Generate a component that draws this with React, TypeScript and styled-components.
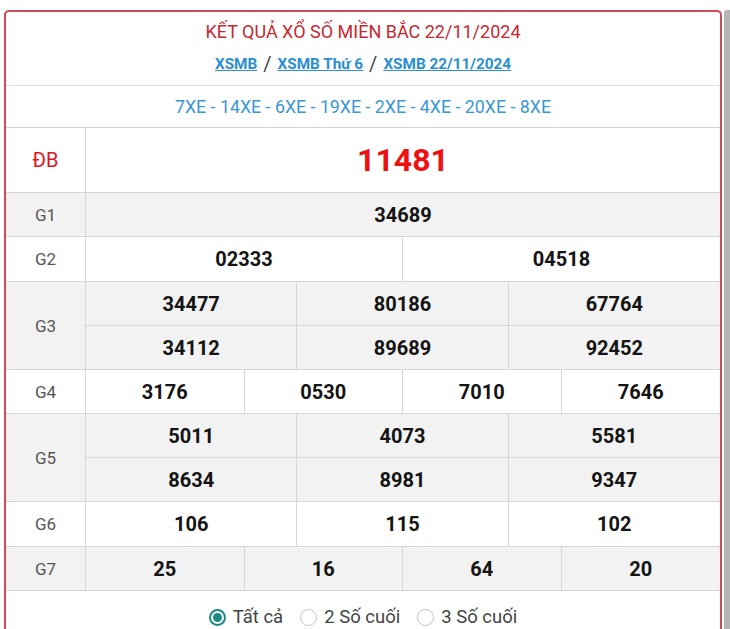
import React from "react";
import styled, { createGlobalStyle } from "styled-components";

const GlobalStyle = createGlobalStyle`
  html, body { margin: 0; padding: 0; background: #fff; }
  body { font-family: Roboto, "Noto Sans", "Liberation Sans", sans-serif; color: #222; }
  * { box-sizing: border-box; }
`;

const Page = styled.div`
  position: relative;
  width: 730px;
  height: 629px;
  overflow: hidden;
  padding: 10px 8px 0 4px;
`;

const ScrollStrip = styled.div`
  position: absolute;
  right: 0;
  top: 10px;
  width: 6px;
  height: 640px;
  background: #b4b4b4;
  border-radius: 3px 0 0 0;
`;

const Card = styled.div`
  width: 718px;
  border: 2px solid #d24a57;
  border-bottom: none;
  border-radius: 5px 5px 0 0;
  background: #fff;
`;

const Header = styled.div`
  display: flex;
  flex-direction: column;
  align-items: center;
  padding: 8px 0 11px;
  border-bottom: 1px solid #dedede;
`;

const Title = styled.h1`
  margin: 0;
  font-size: 18px;
  line-height: 24px;
  font-weight: 400;
  color: #c8282f;
`;

const Crumbs = styled.div`
  margin-top: 10px;
  display: flex;
  align-items: center;
  gap: 6px;
  line-height: 20px;
`;

const Crumb = styled.a`
  font-size: 15.3px;
  font-weight: 700;
  color: #2a8fd0;
  text-decoration: underline;
  cursor: pointer;
`;

const Slash = styled.span`
  font-size: 20px;
  color: #444;
`;

const LotoRow = styled.div`
  height: 42px;
  display: flex;
  align-items: center;
  justify-content: center;
  font-size: 17.8px;
  color: #3b97d6;
  border-bottom: 1px solid #d6d6d6;
`;

const Row = styled.div<{ $gray?: boolean }>`
  display: grid;
  grid-template-columns: 80px 1fr;
  background: ${(p) => (p.$gray ? "#f2f2f2" : "#fff")};
  border-bottom: 1px solid #d6d6d6;
`;

const Label = styled.div<{ $special?: boolean }>`
  display: flex;
  align-items: center;
  justify-content: center;
  border-right: 1px solid #d6d6d6;
  font-size: ${(p) => (p.$special ? "20px" : "17px")};
  color: ${(p) => (p.$special ? "#e0141e" : "#555")};
`;

const Cells = styled.div<{ $cols: number }>`
  display: grid;
  grid-template-columns: repeat(${(p) => p.$cols}, 1fr);
`;

const Cell = styled.div<{ $lastCol: boolean; $lastRow: boolean; $h: number }>`
  height: ${(p) => p.$h}px;
  display: flex;
  align-items: center;
  justify-content: center;
  font-size: 20px;
  font-weight: 700;
  color: #141414;
  border-right: ${(p) => (p.$lastCol ? "none" : "1px solid #d6d6d6")};
  border-bottom: ${(p) => (p.$lastRow ? "none" : "1px solid #d6d6d6")};
`;

const Special = styled.span`
  font-size: 32px;
  font-weight: 700;
  color: #ee1111;
`;

const RadioRow = styled.div`
  display: flex;
  align-items: center;
  justify-content: center;
  gap: 17px;
  height: 52px;
`;

const RadioLabel = styled.label`
  display: flex;
  align-items: center;
  gap: 7px;
  font-size: 18.5px;
  color: #444;
`;

const RadioDot = styled.span<{ $on: boolean }>`
  width: 17px;
  height: 17px;
  border-radius: 50%;
  border: ${(p) => (p.$on ? "2px solid #1a8a82" : "1px solid #c4c4c4")};
  display: flex;
  align-items: center;
  justify-content: center;
  &::after {
    content: "";
    width: 9px;
    height: 9px;
    border-radius: 50%;
    background: ${(p) => (p.$on ? "#1a8a82" : "transparent")};
  }
`;

type Prize = { label: string; cols: number; nums: string[]; gray?: boolean; h?: number };

const prizes: Prize[] = [
  { label: "G1", cols: 1, nums: ["34689"], gray: true },
  { label: "G2", cols: 2, nums: ["02333", "04518"], h: 44 },
  { label: "G3", cols: 3, nums: ["34477", "80186", "67764", "34112", "89689", "92452"], gray: true },
  { label: "G4", cols: 4, nums: ["3176", "0530", "7010", "7646"] },
  { label: "G5", cols: 3, nums: ["5011", "4073", "5581", "8634", "8981", "9347"], gray: true },
  { label: "G6", cols: 3, nums: ["106", "115", "102"], h: 44 },
  { label: "G7", cols: 4, nums: ["25", "16", "64", "20"], gray: true },
];

const PrizeRow: React.FC<{ p: Prize }> = ({ p }) => {
  const rows = Math.ceil(p.nums.length / p.cols);
  return (
    <Row $gray={p.gray}>
      <Label>{p.label}</Label>
      <Cells $cols={p.cols}>
        {p.nums.map((n, i) => {
          const last = Math.floor(i / p.cols) === rows - 1;
          return (
            <Cell
              key={i}
              $lastCol={i % p.cols === p.cols - 1}
              $lastRow={last}
              $h={last ? p.h ?? 43 : 44}
            >
              {n}
            </Cell>
          );
        })}
      </Cells>
    </Row>
  );
};

export default function App() {
  return (
    <>
      <GlobalStyle />
      <Page>
        <Card>
          <Header>
            <Title>KẾT QUẢ XỔ SỐ MIỀN BẮC 22/11/2024</Title>
            <Crumbs>
              <Crumb>XSMB</Crumb>
              <Slash>/</Slash>
              <Crumb>XSMB Thứ 6</Crumb>
              <Slash>/</Slash>
              <Crumb>XSMB 22/11/2024</Crumb>
            </Crumbs>
          </Header>
          <LotoRow>7XE - 14XE - 6XE - 19XE - 2XE - 4XE - 20XE - 8XE</LotoRow>
          <Row>
            <Label $special>ĐB</Label>
            <Cells $cols={1}>
              <Cell $lastCol $lastRow $h={64}>
                <Special>11481</Special>
              </Cell>
            </Cells>
          </Row>
          {prizes.map((p) => (
            <PrizeRow key={p.label} p={p} />
          ))}
          <RadioRow>
            <RadioLabel>
              <RadioDot $on />
              Tất cả
            </RadioLabel>
            <RadioLabel>
              <RadioDot $on={false} />
              2 Số cuối
            </RadioLabel>
            <RadioLabel>
              <RadioDot $on={false} />
              3 Số cuối
            </RadioLabel>
          </RadioRow>
        </Card>
        <ScrollStrip />
      </Page>
    </>
  );
}
